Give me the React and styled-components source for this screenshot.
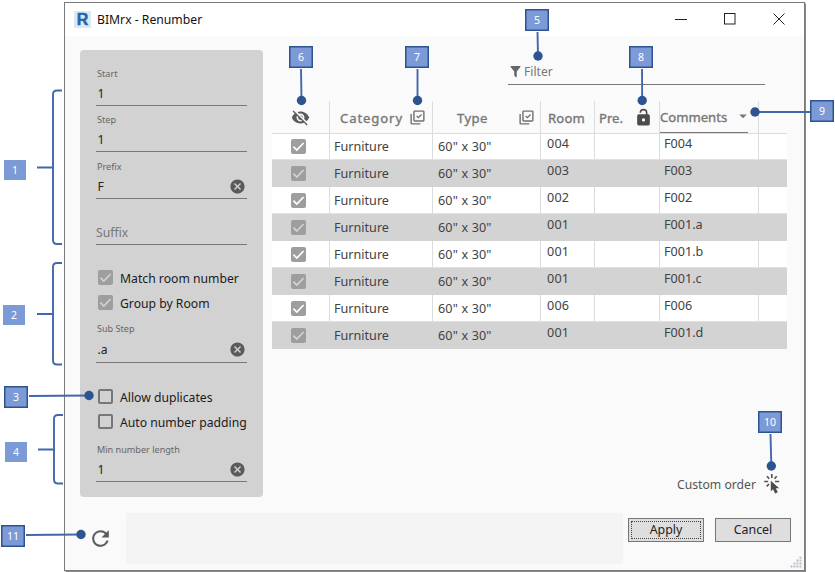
import React from "react";
import styled, { createGlobalStyle } from "styled-components";

const Global = createGlobalStyle`
  * { box-sizing: border-box; }
  body { margin: 0; background: #fff; overflow: hidden; }
`;

const Page = styled.div`
  position: relative;
  width: 835px;
  height: 572px;
  padding: 2px 0 0 64px;
  font-family: "Noto Sans", "Open Sans", sans-serif;
  font-size: 13px;
  color: #222;
  white-space: nowrap;
`;

const Window = styled.div`
  width: 741px;
  height: 569px;
  display: flex;
  flex-direction: column;
  background: #fafafa;
  border: 1px solid #7b7b7b;
  box-shadow: 0 0 1px 0.5px #888;
`;

const TitleBar = styled.header`
  display: flex;
  align-items: center;
  height: 33px;
  padding-left: 9px;
  background: #fff;
`;

const Title = styled.h1`
  flex: 1;
  margin: 0 0 0 6px;
  font-size: 12.2px;
  font-weight: 400;
  line-height: 20px;
  color: #111;
`;

const WindowControls = styled.div`
  display: flex;
  align-items: center;
  gap: 37px;
  margin: -2px 19px 0 0;
`;

const Main = styled.main`
  display: flex;
  height: 461px;
  padding: 14px 17px 0 15px;
`;

const Panel = styled.aside`
  width: 183px;
  height: 447px;
  padding: 16px 16px 0;
  background: #d2d2d2;
  border-radius: 4px;
`;

const Field = styled.div`
  width: 151px;
  margin-top: ${(p) => p.$top || 0}px;
`;

const FieldLabel = styled.div`
  height: 16px;
  padding-left: 1px;
  font-size: 9.1px;
  line-height: 16px;
  color: #666;
`;

const FieldValue = styled.div`
  display: flex;
  align-items: center;
  justify-content: space-between;
  height: ${(p) => p.$height || 24}px;
  padding: 0 1px 1px ${(p) => (p.$placeholder ? 0 : 1.5)}px;
  border-bottom: 1px solid #777;
  font-size: 12.2px;
  color: ${(p) => (p.$placeholder ? "#777" : "#222")};
`;

const CheckRow = styled.div`
  display: flex;
  align-items: center;
  gap: 7px;
  height: 25px;
  margin-top: ${(p) => p.$top || 0}px;
  padding-left: 2px;
`;

const CheckText = styled.span`
  padding-top: 3px;
  font-size: 12.2px;
  line-height: 20px;
  color: #1a1a1a;
`;

const Box = styled.span`
  flex: none;
  display: grid;
  place-items: center;
  width: 15px;
  height: 15px;
  border-radius: 2px;
  background: ${(p) => (p.$checked ? "#9e9e9e" : "transparent")};
  border: ${(p) => (p.$checked ? "0" : "2px solid #777")};
  color: ${(p) => p.$mark || "#d2d2d2"};
`;

const Content = styled.section`
  flex: 1;
  display: flex;
  flex-direction: column;
  padding-left: 9px;
`;

const FilterField = styled.div`
  display: flex;
  align-items: center;
  gap: 1px;
  width: 257px;
  height: 27px;
  margin: 8px 0 0 236px;
  padding-top: 1px;
  border-bottom: 1px solid #777;
  font-size: 12.1px;
  color: #777;
`;

const Table = styled.div`
  width: 515px;
  margin-top: 16px;
`;

const Row = styled.div`
  display: grid;
  grid-template-columns: 58px 103px 108px 54px 65px 99px 28px;
  height: 27px;
  background: ${(p) => (p.$shaded ? "#d3d3d3" : "#fff")};
`;

const HeadRow = styled(Row)`
  height: 32px;
  background: transparent;
`;

const Cell = styled.div`
  display: flex;
  align-items: center;
  padding-left: ${(p) => p.$pad || 0}px;
  padding-bottom: ${(p) => (p.$raised ? 5 : 0)}px;
  border-right: ${(p) => (p.$last ? 0 : 1)}px solid ${(p) => (p.$shaded ? "transparent" : "#dcdcdc")};
  border-bottom: 1px solid ${(p) => (p.$shaded ? "transparent" : "#e2e2e2")};
  font-size: 12.6px;
  letter-spacing: ${(p) => p.$spacing || 0}px;
  color: #424242;
`;

const HeadCell = styled(Cell)`
  padding-top: 1px;
  padding-right: ${(p) => p.$right || 0}px;
  justify-content: ${(p) => p.$justify || "flex-start"};
  border-bottom: 1px solid #dcdcdc;
  font-size: 13.1px;
  -webkit-text-stroke: 0.35px #777;
  color: #777;
`;

const SortLabel = styled.div`
  display: flex;
  align-items: center;
  justify-content: space-between;
  width: 88px;
  height: 31px;
  border-bottom: 1px solid #777;

  svg { margin: -3px -4px 0 0; }
`;

const CustomOrder = styled.div`
  display: flex;
  align-items: center;
  justify-content: flex-end;
  gap: 8px;
  height: 24px;
  margin-top: 123px;
  padding-right: 6px;
  font-size: 12.2px;
  color: #555;
`;

const Footer = styled.footer`
  display: flex;
  flex: 1;
  padding: 16px 0 0 23px;
`;

const RefreshSlot = styled.div`
  width: 38px;
  padding-top: 13px;
`;

const StatusArea = styled.div`
  width: 497px;
  height: 51px;
  background: #f4f4f4;
`;

const Buttons = styled.div`
  display: flex;
  gap: 11px;
  margin: 5px 0 0 5px;
`;

const Button = styled.button`
  width: 76px;
  height: 24px;
  padding: 0;
  border: 1px solid #777;
  border-radius: 0;
  background: #dedede;
  font-family: inherit;
  font-size: 12.4px;
  line-height: 18px;
  color: #222;
  outline: ${(p) => (p.$focused ? "1px dotted #444" : "none")};
  outline-offset: -4px;
`;

const Overlay = styled.svg`
  position: absolute;
  inset: 0;
  pointer-events: none;
`;

const Badge = styled.span`
  position: absolute;
  left: ${(p) => p.$x}px;
  top: ${(p) => p.$y}px;
  width: ${(p) => (p.$framed ? 24 : 22)}px;
  height: ${(p) => (p.$framed ? 22 : 20)}px;
  display: grid;
  place-items: center;
  background: #7c9bd6;
  box-shadow: ${(p) => (p.$framed ? "inset 0 0 0 1.5px #2d5391" : "none")};
  color: #fff;
  font-size: 10.5px;
  line-height: 14px;
`;

const Grip = styled.svg`
  position: absolute;
  left: 790px;
  top: 556px;
`;

const LogoTile = styled.span`
  display: grid;
  place-items: center;
  width: 17px;
  height: 17px;
  background: #dbe8f5;
  font-family: "Liberation Sans", sans-serif;
  font-size: 16px;
  font-weight: 700;
  line-height: 17px;
  color: #1f67ad;
  -webkit-text-stroke: 0.5px #1f67ad;
`;

const IconShape = styled.svg`
  flex: none;
`;

const Icon = ({ d, size = 18, color = "#5a5a5a" }) => (
  <IconShape width={size} height={size} viewBox="0 0 24 24" fill={color}>
    <path d={d} />
  </IconShape>
);

const paths = {
  clear: "M12 2C6.47 2 2 6.47 2 12s4.47 10 10 10 10-4.47 10-10S17.53 2 12 2zm5 13.59L15.59 17 12 13.41 8.41 17 7 15.59 10.59 12 7 8.41 8.41 7 12 10.59 15.59 7 17 8.41 13.41 12 17 15.59z",
  filter: "M14 12v7.88c.04.3-.06.62-.29.83a1 1 0 0 1-1.41 0l-2.01-2.01a.99.99 0 0 1-.29-.83V12h-.03L4.21 4.62a1 1 0 0 1 .17-1.4C4.57 3.08 4.78 3 5 3h14c.22 0 .43.08.62.22a1 1 0 0 1 .17 1.4L14.03 12H14z",
  eyeOff: "M12 7c2.76 0 5 2.24 5 5 0 .65-.13 1.26-.36 1.83l2.92 2.92c1.51-1.26 2.7-2.89 3.43-4.75-1.73-4.39-6-7.5-11-7.5-1.4 0-2.74.25-3.98.7l2.16 2.16C10.74 7.13 11.35 7 12 7zM2 4.27l2.28 2.28.46.46C3.08 8.3 1.78 10.02 1 12c1.73 4.39 6 7.5 11 7.5 1.55 0 3.03-.3 4.38-.84l.42.42L19.73 22 21 20.73 3.27 3 2 4.27zM7.53 9.8l1.55 1.55c-.05.21-.08.43-.08.65 0 1.66 1.34 3 3 3 .22 0 .44-.03.65-.08l1.55 1.55c-.67.33-1.41.53-2.2.53-2.76 0-5-2.24-5-5 0-.79.2-1.53.53-2.2zm4.31-.78 3.15 3.15.02-.16c0-1.66-1.34-3-3-3l-.17.01z",
  multiCheck: "M20 16V4H8v12h12M22 16a2 2 0 0 1-2 2H8a2 2 0 0 1-2-2V4c0-1.1.9-2 2-2h12a2 2 0 0 1 2 2v12M16 20v2H4a2 2 0 0 1-2-2V7h2v13h12m-2.8-6.5L10.2 10.5l1.3-1.3 1.7 1.7 3.9-3.9 1.3 1.3-5.2 5.2z",
  lockOpen: "M18 8a2 2 0 0 1 2 2v10a2 2 0 0 1-2 2H6a2 2 0 0 1-2-2V10a2 2 0 0 1 2-2h9V6a3 3 0 0 0-6 0H7a5 5 0 0 1 10 0v2h1m-6 9a2 2 0 0 0 2-2 2 2 0 0 0-4 0 2 2 0 0 0 2 2z",
  refresh: "M17.65 6.35A7.958 7.958 0 0 0 12 4c-4.42 0-7.99 3.58-7.99 8s3.57 8 7.99 8c3.73 0 6.84-2.55 7.73-6h-2.08A5.99 5.99 0 0 1 12 18c-3.31 0-6-2.69-6-6s2.69-6 6-6c1.66 0 3.14.69 4.22 1.78L13 11h7V4l-2.35 2.35z",
  caret: "M7 10l5 5 5-5z",
};

const Check = () => (
  <svg width="15" height="15" viewBox="0 0 15 15" fill="none" stroke="currentColor" strokeWidth="1.7">
    <path d="M2.4 7.6 5.8 11 12.6 4" />
  </svg>
);

const ClickIcon = () => (
  <svg width="17" height="20" viewBox="0 0 17 20">
    <g stroke="#555" strokeWidth="1.7">
      <path d="M7.8 0v3.9M3 2.2l2.2 2.6M12.7 2.2l-2.2 2.6M.2 7.5h3.9M11 7.5h4.2M5 10l-2.3 2.4" />
    </g>
    <path d="M6.8 6.8v10.4l2.3-2 2 4.3 2.7-1.2-2-4h3.4z" fill="#4c4c4c" />
  </svg>
);

const TextField = ({ label, value, clearable, top, height }) => (
  <Field $top={top}>
    <FieldLabel>{label}</FieldLabel>
    <FieldValue $height={height}>
      {value}
      {clearable && <Icon d={paths.clear} size={17} />}
    </FieldValue>
  </Field>
);

const CheckOption = ({ checked, children, top }) => (
  <CheckRow $top={top}>
    <Box $checked={checked}>{checked && <Check />}</Box>
    <CheckText>{children}</CheckText>
  </CheckRow>
);

const rows = [
  ["004", "F004"],
  ["003", "F003"],
  ["002", "F002"],
  ["001", "F001.a"],
  ["001", "F001.b"],
  ["001", "F001.c"],
  ["006", "F006"],
  ["001", "F001.d"],
];

const badges = [
  ["1", 4, 160], ["2", 3, 305], ["3", 4, 386, true], ["4", 5, 442],
  ["5", 525, 9, true], ["6", 289, 46, true], ["7", 405, 46, true],
  ["8", 629, 46, true], ["9", 810, 100, true], ["10", 758, 411, true],
  ["11", 1, 525, true],
];

const pointers = [
  [29, 396, 89, 395.5], [26, 535, 81, 534.5], [537.5, 32, 538, 56],
  [301, 69, 301.5, 100.5], [417.5, 69, 417.5, 100.5], [642, 69, 642.2, 100.5],
  [810, 112, 755, 112], [770.5, 434, 771.3, 466],
];

const DataRow = ({ shaded, room, comment }) => (
  <Row $shaded={shaded}>
    <Cell $shaded={shaded} $pad={19}>
      <Box $checked $mark={shaded ? "#d3d3d3" : "#fff"}><Check /></Box>
    </Cell>
    <Cell $shaded={shaded} $pad={4}>Furniture</Cell>
    <Cell $shaded={shaded} $pad={5} $spacing={0.15}>60" x 30"</Cell>
    <Cell $shaded={shaded} $pad={6} $spacing={0.2} $raised>{room}</Cell>
    <Cell $shaded={shaded} />
    <Cell $shaded={shaded} $pad={4} $raised>{comment}</Cell>
    <Cell $shaded={shaded} $last />
  </Row>
);

export default function App() {
  return (
    <Page>
      <Global />
      <Window>
        <TitleBar>
          <LogoTile>R</LogoTile>
          <Title>BIMrx - Renumber</Title>
          <WindowControls>
            <svg width="12" height="12" stroke="#222"><path d="M0 6.5h12" /></svg>
            <svg width="12" height="12" fill="none" stroke="#222"><rect x=".5" y=".5" width="10.5" height="10.5" /></svg>
            <svg width="12" height="12" stroke="#222"><path d="M.5.5l11 11M11.5.5l-11 11" /></svg>
          </WindowControls>
        </TitleBar>
        <Main>
          <Panel>
            <TextField label="Start" value="1" />
            <TextField label="Step" value="1" top={6} />
            <TextField label="Prefix" value="F" clearable top={7} />
            <Field $top={22}>
              <FieldValue $placeholder>Suffix</FieldValue>
            </Field>
            <CheckOption checked top={20}>Match room number</CheckOption>
            <CheckOption checked>Group by Room</CheckOption>
            <TextField label="Sub Step" value=".a" clearable top={6} height={26} />
            <CheckOption top={21}>Allow duplicates</CheckOption>
            <CheckOption>Auto number padding</CheckOption>
            <TextField label="Min number length" value="1" clearable top={8} />
          </Panel>
          <Content>
            <FilterField>
              <Icon d={paths.filter} size={15} color="#666" />
              Filter
            </FilterField>
            <Table>
              <HeadRow>
                <HeadCell $pad={19}><Icon d={paths.eyeOff} size={19} /></HeadCell>
                <HeadCell $pad={10} $right={6} $spacing={0.9} $justify="space-between">
                  Category <Icon d={paths.multiCheck} size={17} color="#707070" />
                </HeadCell>
                <HeadCell $pad={24} $right={5} $spacing={0.4} $justify="space-between">
                  Type <Icon d={paths.multiCheck} size={17} color="#707070" />
                </HeadCell>
                <HeadCell $pad={7} $spacing={0.2}>Room</HeadCell>
                <HeadCell $pad={4} $right={6} $justify="space-between">
                  Pre. <Icon d={paths.lockOpen} size={19} color="#4c4c4c" />
                </HeadCell>
                <HeadCell>
                  <SortLabel>
                    Comments <Icon d={paths.caret} size={18} color="#777" />
                  </SortLabel>
                </HeadCell>
                <HeadCell $last />
              </HeadRow>
              {rows.map(([room, comment], i) => (
                <DataRow key={comment} shaded={i % 2 === 1} room={room} comment={comment} />
              ))}
            </Table>
            <CustomOrder>
              Custom order
              <ClickIcon />
            </CustomOrder>
          </Content>
        </Main>
        <Footer>
          <RefreshSlot><Icon d={paths.refresh} size={25} color="#5c5c5c" /></RefreshSlot>
          <StatusArea />
          <Buttons>
            <Button $focused>Apply</Button>
            <Button>Cancel</Button>
          </Buttons>
        </Footer>
      </Window>
      <Grip width="12" height="12" fill="#b9c0cc">
        {[[9, 0], [6, 3], [9, 3], [3, 6], [6, 6], [9, 6], [0, 9], [3, 9], [6, 9], [9, 9]].map(([x, y]) => (
          <rect key={`${x}-${y}`} x={x + 0.5} y={y + 0.5} width="2" height="2" />
        ))}
      </Grip>
      <Overlay width="835" height="572" fill="none">
        <g stroke="#4268ab" strokeWidth="1.9">
          <path d="M62 90.5h-5q-4 0-4 4V240q0 4 4 4h5M37 167.5h16" />
          <path d="M62 263h-5q-4 0-4 4v93.5q0 4 4 4h5M37 314h16" />
          <path d="M63 415h-5q-4 0-4 4v60.5q0 4 4 4h5M38 449.5h16" />
          {pointers.map(([x1, y1, x2, y2]) => (
            <line key={`${x1}-${y1}`} x1={x1} y1={y1} x2={x2} y2={y2} />
          ))}
        </g>
        <g fill="#2d5391">
          {pointers.map(([x1, y1, x2, y2]) => (
            <circle key={`${x1}-${y1}`} cx={x2} cy={y2} r="4.7" />
          ))}
        </g>
      </Overlay>
      {badges.map(([label, x, y, framed]) => (
        <Badge key={label} $x={x} $y={y} $framed={framed}>{label}</Badge>
      ))}
    </Page>
  );
}
